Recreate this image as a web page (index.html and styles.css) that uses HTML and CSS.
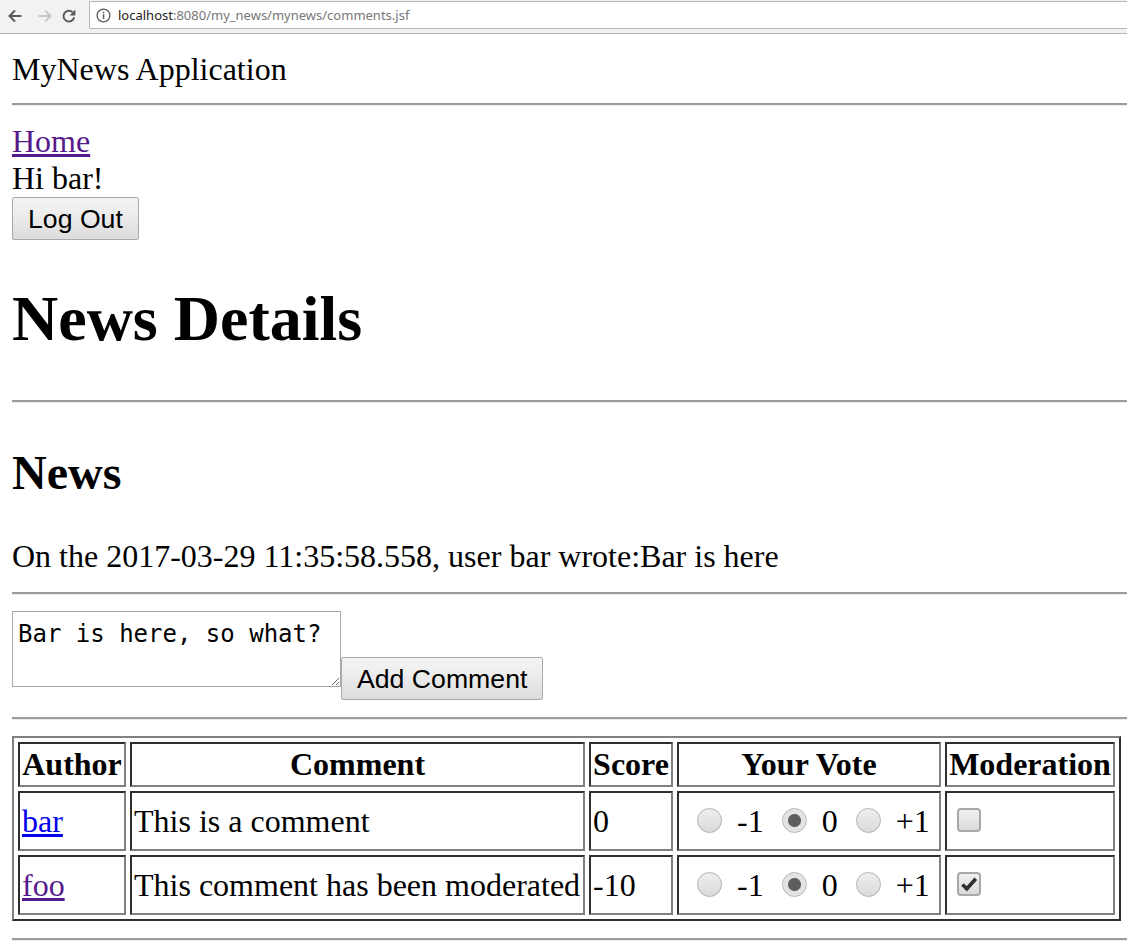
FILE: index.html
```html
<!DOCTYPE html>
<html>
<head>
<meta charset="utf-8">
<title>MyNews</title>
<link rel="stylesheet" href="styles.css">
</head>
<body>
<div class="toolbar">
  <span class="tb-icon back">
    <svg width="16" height="16" viewBox="0 0 16 16"><path d="M14.5 8H2.5M8 2.5L2.5 8L8 13.5" fill="none" stroke="#5a5a5a" stroke-width="2"/></svg>
  </span>
  <span class="tb-icon fwd">
    <svg width="16" height="16" viewBox="0 0 16 16"><path d="M1.5 8H13.5M8 2.5L13.5 8L8 13.5" fill="none" stroke="#c8c8c8" stroke-width="2"/></svg>
  </span>
  <span class="tb-icon reload">
    <svg width="16" height="16" viewBox="0 0 16 16"><path d="M13.2 9.2A5.4 5.4 0 1 1 11.6 4.2" fill="none" stroke="#5a5a5a" stroke-width="2"/><path d="M14.4 1.6V7.4H8.6Z" fill="#5a5a5a"/></svg>
  </span>
  <div class="address">
    <svg class="info" width="15" height="15" viewBox="0 0 15 15"><circle cx="7.5" cy="7.5" r="6.4" fill="none" stroke="#5a5a5a" stroke-width="1.3"/><rect x="6.8" y="6.2" width="1.5" height="4.6" fill="#5a5a5a"/><rect x="6.8" y="3.8" width="1.5" height="1.5" fill="#5a5a5a"/></svg>
    <span class="url"><span class="host">localhost</span>:8080/my_news/mynews/comments.jsf</span>
  </div>
</div>

<div class="page">
  <div class="app-title">MyNews Application</div>
  <hr class="rule rule-1">
  <div class="nav">
    <a class="visited" href="#">Home</a><br>
    Hi bar!<br>
    <button class="btn">Log Out</button>
  </div>
  <h1 class="title">News Details</h1>
  <hr class="rule">
  <h2 class="subtitle">News</h2>
  <p class="news-line">On the 2017-03-29 11:35:58.558, user bar wrote:Bar is here</p>
  <hr class="rule rule-3">
  <div class="comment-form">
    <textarea class="comment-input">Bar is here, so what?</textarea>
    <button class="btn add-btn">Add Comment</button>
  </div>
  <hr class="rule rule-4">
  <table class="comments">
    <thead>
      <tr>
        <th class="c-author">Author</th>
        <th class="c-comment">Comment</th>
        <th class="c-score">Score</th>
        <th class="c-vote">Your Vote</th>
        <th class="c-mod">Moderation</th>
      </tr>
    </thead>
    <tbody>
      <tr class="row">
        <td><a class="link" href="#">bar</a></td>
        <td>This is a comment</td>
        <td>0</td>
        <td>
          <div class="vote">
            <span class="opt"><span class="radio"></span><span class="lbl">-1</span></span>
            <span class="opt"><span class="radio on"></span><span class="lbl">0</span></span>
            <span class="opt"><span class="radio"></span><span class="lbl">+1</span></span>
          </div>
        </td>
        <td><span class="check"></span></td>
      </tr>
      <tr class="row">
        <td><a class="visited" href="#">foo</a></td>
        <td>This comment has been moderated</td>
        <td>-10</td>
        <td>
          <div class="vote">
            <span class="opt"><span class="radio"></span><span class="lbl">-1</span></span>
            <span class="opt"><span class="radio on"></span><span class="lbl">0</span></span>
            <span class="opt"><span class="radio"></span><span class="lbl">+1</span></span>
          </div>
        </td>
        <td><span class="check"><svg width="24" height="24" viewBox="0 0 24 24"><path d="M5.5 12.5L9.8 16.8L18.8 6.8" fill="none" stroke="#2e2e2e" stroke-width="3.6"/></svg></span></td>
      </tr>
    </tbody>
  </table>
  <hr class="rule rule-5">
</div>
</body>
</html>
```

FILE: styles.css
```css
html, body {
  margin: 0;
  padding: 0;
  background: #ffffff;
}

body {
  font-family: "Liberation Serif", "Times New Roman", serif;
  font-size: 32px;
  line-height: 37px;
  color: #000000;
  overflow: hidden;
}

/* browser toolbar */
.toolbar {
  height: 33px;
  background: #f2f2f2;
  border-bottom: 1px solid #b4b4b4;
  display: flex;
  align-items: flex-start;
  padding-left: 7px;
  box-sizing: content-box;
}

.tb-icon {
  display: flex;
  width: 16px;
  height: 16px;
  margin-top: 8px;
}

.tb-icon.fwd { margin-left: 14px; }
.tb-icon.reload { margin-left: 8px; }

.address {
  margin-left: 12px;
  margin-top: 1px;
  height: 26px;
  flex: 1;
  margin-right: -4px;
  background: #ffffff;
  border: 1px solid #b8b8b8;
  border-right: none;
  border-radius: 2px 0 0 2px;
  display: flex;
  align-items: center;
  padding-left: 6px;
}

.info {
  display: block;
  flex: none;
}

.url {
  margin-left: 7px;
  font-family: "Noto Sans", "Open Sans", sans-serif;
  font-size: 13px;
  line-height: 20px;
  color: #777777;
  white-space: nowrap;
}

.host { color: #222222; }

/* page */
.page {
  padding-left: 12px;
}

.app-title {
  margin-top: 17px;
}

.rule {
  display: block;
  margin: 0;
  height: 0;
  border: none;
  border-top: 2px solid #9c9c9c;
  border-bottom: 1px solid #ececec;
}

.rule-1 { margin-top: 15px; }
.rule-3 { margin-top: 17px; }
.rule-4 { margin-top: 17px; }
.rule-5 { margin-top: 17px; }

.nav {
  margin-top: 17px;
}

a { text-decoration: underline; }
.link { color: #0000ee; }
.visited { color: #551a8b; }

.btn {
  display: block;
  margin: 0;
  height: 43px;
  padding: 0 15px;
  font-family: "Liberation Sans", Arial, sans-serif;
  font-size: 26.67px;
  line-height: 30px;
  color: #000000;
  border: 1px solid #a9a9a9;
  border-radius: 2px;
  background: linear-gradient(#f4f4f4, #ededed 38%, #dcdcdc);
}

.title {
  margin: 42px 0 44px;
  font-size: 64px;
  line-height: 74px;
  font-weight: bold;
}

.subtitle {
  margin: 42px 0 0;
  font-size: 48px;
  line-height: 55px;
  font-weight: bold;
}

.news-line {
  margin: 38px 0 0;
}

.comment-form {
  margin-top: 16px;
  display: flex;
  align-items: flex-start;
}

.comment-input {
  width: 329px;
  height: 76px;
  box-sizing: border-box;
  margin: 0;
  padding: 8px 5px;
  border: 1px solid #a9a9a9;
  font-family: "DejaVu Sans Mono", "Liberation Mono", monospace;
  font-size: 24px;
  line-height: 28px;
  color: #000000;
  overflow: hidden;
}

.add-btn {
  margin-top: 46px;
}

/* table */
.comments {
  margin-top: 16px;
  border: 2px solid;
  border-color: #808080 #2e2e2e #2e2e2e #808080;
  border-spacing: 4px;
  border-collapse: separate;
}

.comments th,
.comments td {
  border: 2px solid;
  border-color: #2e2e2e #808080 #808080 #2e2e2e;
  padding: 2px;
  font-size: 32px;
  line-height: 37px;
}

.comments th {
  font-weight: bold;
  text-align: center;
}

.comments td {
  text-align: left;
  vertical-align: middle;
  white-space: nowrap;
}

.c-author { width: 100px; }
.c-comment { width: 447px; }
.c-score { width: 76px; }
.c-vote { width: 256px; }
.c-mod { width: 162px; }

.row td {
  box-sizing: border-box;
  height: 60px;
}

.vote {
  display: flex;
  align-items: center;
  padding-left: 6px;
}

.opt {
  display: flex;
  align-items: center;
}

.opt + .opt { margin-left: 8px; }

.radio {
  display: block;
  width: 25px;
  height: 25px;
  box-sizing: border-box;
  margin: 0 15px 2px 10px;
  border-radius: 50%;
  border: 1px solid #b2b2b2;
  background: linear-gradient(#efefef, #d9d9d9);
}

.radio.on {
  background: radial-gradient(circle, #5e5e5e 0, #5e5e5e 6px, #e2e2e2 7px, #e6e6e6 100%);
  border-color: #b8b8b8;
}

.check {
  display: block;
  width: 24px;
  height: 24px;
  box-sizing: border-box;
  margin-left: 8px;
  margin-bottom: 2px;
  border: 2px solid #a8a8a8;
  border-radius: 4px;
  background: linear-gradient(#f0f0f0, #dadada);
  position: relative;
}

.check svg {
  position: absolute;
  left: -2px;
  top: -2px;
}
```
